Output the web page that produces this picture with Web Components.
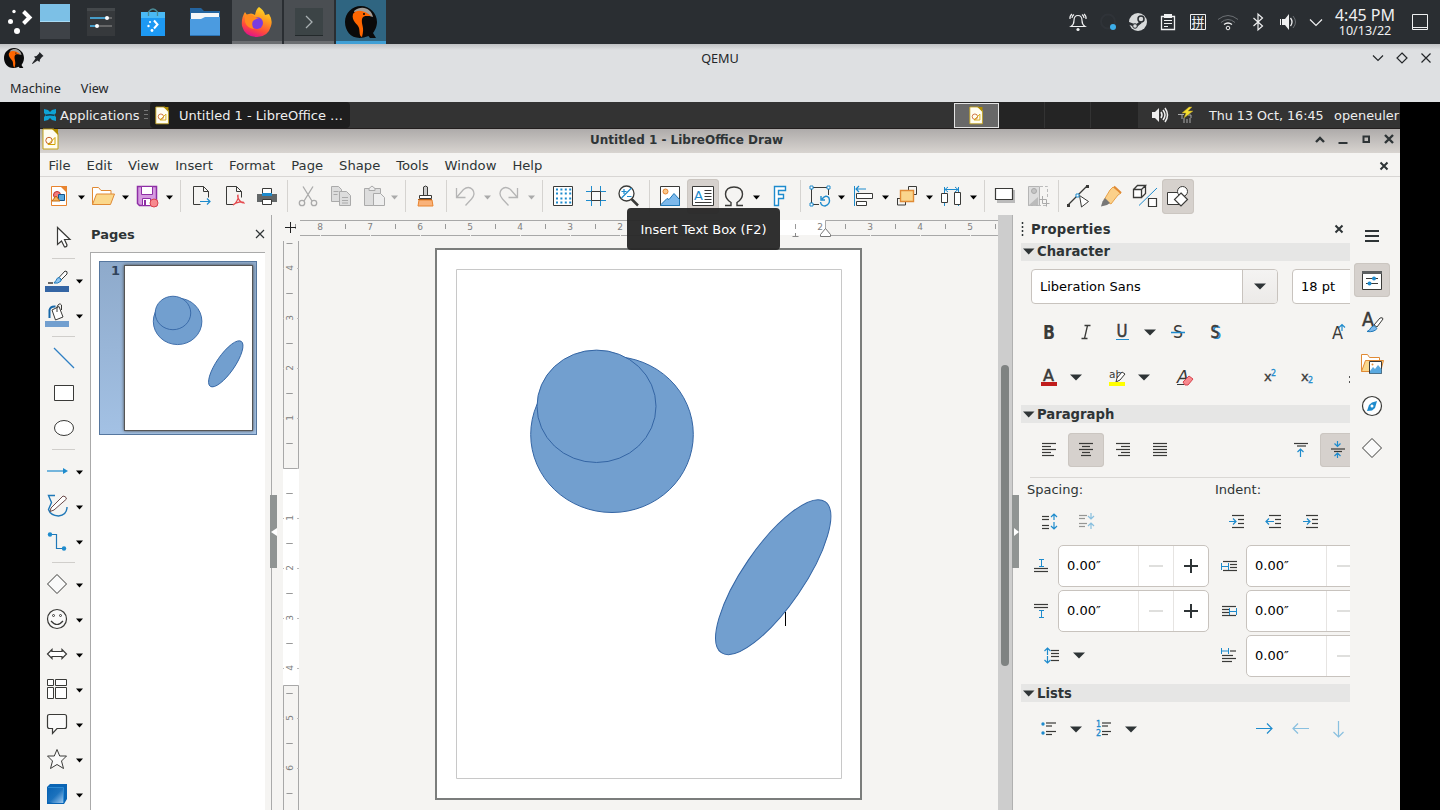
<!DOCTYPE html>
<html lang="en"><head><meta charset="utf-8"><title>QEMU</title>
<style>
html,body{margin:0;height:100%;background:#000;overflow:hidden}
body{width:1440px;height:810px;font:13.33px "DejaVu Sans",sans-serif;color:#2e3436}
</style></head><body>
<desk-top></desk-top>
<script>
const K='#3a3a38',B='#1e8bcd';
const lines=(a,c=K)=>a.map(([x1,x2,y])=>`<path d="M${x1} ${y}H${x2}" stroke="${c}" stroke-width="1.200"/>`).join('');
const up=(x,y1,y2,c=B,s=3)=>`<path d="M${x} ${y2}V${y1}m${-s} ${s}l${s} ${-s}l${s} ${s}" fill="none" stroke="${c}" stroke-width="1.200"/>`;
const down=(x,y1,y2,c=B,s=3)=>`<path d="M${x} ${y1}V${y2}m${-s} ${-s}l${s} ${s}l${s} ${-s}" fill="none" stroke="${c}" stroke-width="1.200"/>`;
const right=(x1,x2,y,c=B,s=3)=>`<path d="M${x1} ${y}H${x2}m${-s} ${-s}l${s} ${s}l${-s} ${s}" fill="none" stroke="${c}" stroke-width="1.200"/>`;
const left=(x1,x2,y,c=B,s=3)=>`<path d="M${x2} ${y}H${x1}m${s} ${-s}l${-s} ${s}l${s} ${s}" fill="none" stroke="${c}" stroke-width="1.200"/>`;
const t=(s,x,y,size,fill=K,extra='')=>`<text x="${x}" y="${y}" font-size="${size}" fill="${fill}" ${extra}>${s}</text>`;
const qemu=`<path d="M16 0C24.500 0 32 7 32 16C32 21 29.500 25 28 27L31 32H25L23.500 30C9 36 0 27 0 16C0 7 7 0 16 0Z" fill="#0a0a0a"/><path d="M9 5C17-2 27 3 28 11L21 9C12 5 9 7 9 5Z" fill="#c9c3bd" opacity=".8"/><path d="M8 8C12 2 21 5 26 10C22 10 18 9 17 13C16 19 20 21 17 31C14 30 15 26 14 22C13 18 6 15 8 8Z" fill="#f60"/><circle cx="19" cy="8" r="1" fill="#000"/>`;
const drawdoc=`<path d="M1 0H12L16 4.500V20H1Z" fill="#fffdf0" stroke="#c3a21a"/><path d="M10 0h6v6z" fill="#b08d00"/><circle cx="7" cy="11.500" r="3.200" fill="none" stroke="#c8622b"/><path d="M6 15.500h7v-7z" fill="none" stroke="#d2a400"/>`;
const ICONS={
dd:[7,5,`<path d="M0 .5H7L3.500 4.500Z" fill="#000"/>`],
ddg:[7,5,`<path d="M0 .5H7L3.500 4.500Z" fill="#aaa"/>`],
ddl:[12,7,`<path d="M0 .5H12L6 6.500Z" fill="#2e3436"/>`],
sep:[1,32,`<path d="M.5 0V32" stroke="#d5d3d0"/>`],
newdoc:[24,24,`<path d="M4.500 2.500h10l5 5v14h-15z" fill="#fff" stroke="#e8842f"/><path d="M13 2h7v7z" fill="#e8842f"/><circle cx="10" cy="11" r="3.500" fill="#f47b7b" stroke="#b92c2c"/><path d="M11.500 10.500h6v6h-6z" fill="#5aa9e0" stroke="#15548a"/><path d="M5 17l4-5 4 5z" fill="#f5b35c" stroke="#c06a10"/>`],
open:[24,24,`<path d="M1.500 20.500v-17h6l2.500 3h10v4" fill="#fff" stroke="#e08a35"/><path d="M1.500 20.500l4-10.500h18l-4 10.500z" fill="#fbd88c" stroke="#e08a35"/>`],
save:[24,24,`<path d="M2.500 2.500h19v19h-17l-2-2z" fill="#d59be0" stroke="#8e2fa5" stroke-width="1.500"/><path d="M6.500 2.500h11v8h-11z" fill="#fff" stroke="#8e2fa5"/><path d="M7.500 14.500h8v7h-8z" fill="#fff" stroke="#8e2fa5"/><path d="M9 16h2v5h-2z" fill="#8e2fa5"/><circle cx="19" cy="19" r="4" fill="#f78a8f" stroke="#d8434e"/>`],
exp:[24,24,`<path d="M4.500 20.500v-18h10l5 5v6M14.500 2.500v5h5M4.500 20.500h7" fill="none" stroke="${K}"/>${right(11,21,17.5)}`],
pdf:[24,24,`<path d="M4.500 20.500v-18h10l5 5v6M14.500 2.500v5h5M4.500 20.500h7" fill="none" stroke="${K}"/><path d="M11 21c3-1 6-7 5-10c-1 0 0 7 6 8c-1-2-8-1-11 2z" fill="none" stroke="#e5484d" stroke-width="1.200"/>`],
print:[24,24,`<path d="M7.500 12V4.500h9V12" fill="#fff" stroke="${K}"/><path d="M2 10h20v8h-20z" fill="#636768"/><path d="M7 9h10v3H7z" fill="#1e8bcd"/><path d="M7.500 15.500h9v5h-9z" fill="#fff" stroke="${K}"/>`],
cut:[24,24,`<g fill="none" stroke="#aaa" stroke-width="1.300"><path d="M7 2.500l9 14.500M17 2.500L8 17"/><circle cx="6" cy="19" r="2.700"/><circle cx="18" cy="19" r="2.700"/></g>`],
copy:[24,24,`<g fill="#ddd" stroke="#aaa"><path d="M2.500 2.500h7l3 3v12h-10z"/><path d="M10.500 7.500h7l4 4v10h-11z"/></g><path d="M4.500 7.500h5M4.500 10.500h4M13 13.500h6M13 16.500h6M13 19h6" stroke="#aaa"/>`],
paste:[24,24,`<g fill="#ddd" stroke="#aaa"><path d="M2.500 4.500h16v17h-16z"/><path d="M7 6.500V4.500l3-2.500 3 2.500v2z" fill="#eee"/><path d="M11.500 9.500h7l4 4v8h-11z" fill="#eee"/></g>`],
brush:[24,24,`<path d="M10.500 11V3q2-2 4 0v8" fill="#ccc" stroke="${K}"/><path d="M6.500 11.500h12v3h-12z" fill="#fff" stroke="${K}"/><path d="M6 16h13l1 6H5z" fill="#f9b27a" stroke="#e8842f"/><path d="M5 15.500h14" stroke="#b25a12"/>`],
undo:[24,24,`<path d="M3.500 4v9.500h9M3.500 13.500L10.500 5.500Q15.500 1.500 19.500 5.500Q23 10 18.500 15L12.500 21.500" fill="none" stroke="#b5b5b5" stroke-width="1.300"/>`],
redo:[24,24,`<path d="M20.500 4v9.500h-9M20.500 13.500L13.500 5.500Q8.500 1.500 4.500 5.500Q1 10 5.500 15L11.500 21.500" fill="none" stroke="#b5b5b5" stroke-width="1.300"/>`],
grid:[24,24,`<path d="M2.500 2.500h19v19h-19z" fill="#fff" stroke="${K}"/><path d="M5 5.500h16M5 9.500h16M5 14.500h16M5 18.500h16" stroke="${B}" stroke-width="2" stroke-dasharray="2 2.400"/>`],
snap:[24,24,`<path d="M7.500 2v20M16.500 2v20M2 7.500h20M2 16.500h20" stroke="${B}"/><path d="M7.500 7.500h9v9h-9z" fill="#fafafa" stroke="${K}"/>`],
zoom:[24,24,`<circle cx="10.500" cy="9.500" r="7.500" fill="#fff" stroke="${K}" stroke-width="1.300"/><path d="M15.500 15l6.500 6.500" stroke="${K}" stroke-width="2.500"/><path d="M5.500 14L15.500 4M5.500 7.500h5M8 5v5M11 12.500h4.500" stroke="${B}" stroke-width="1.200"/>`],
image:[24,24,`<path d="M2.500 2.500h19v19h-19z" fill="#fff" stroke="${K}"/><circle cx="7.500" cy="7.500" r="2.500" fill="#fbc88a" stroke="#e8842f"/><path d="M3 20.500l6-6 2 1 5-6 5.500 6v6H3z" fill="#7db9ec" stroke="#1f78b8"/>`],
textbox:[24,24,`<path d="M1.500 2.500h21v19h-21z" fill="#fff" stroke="${K}"/>${t('A',3,15.5,13,B)}<path d="M13.500 6.500h7M13.500 9.500h7M13.500 12.500h7M13.500 15.500h7M4 18.500h16.500" stroke="${K}"/>`],
omega:[24,24,`<path d="M3 21.500h6v-3Q3.500 15 3.500 10Q4 3 12 3Q20 3 20.500 10Q20.500 15 15 18.500v3h6" fill="none" stroke="${K}" stroke-width="1.400"/>`],
fw:[24,24,`<path d="M6.500 21.500v-19h11v4h-7v4h5v4h-5v7z" fill="#fff" stroke="${B}" stroke-width="1.400"/>`],
rot:[24,24,`<path d="M3.500 4V20M4 3.500H20M20.500 4V11M4 20.500H11" stroke="${K}"/><g fill="#fff" stroke="${B}"><path d="M2 2h3v3h-3zM19 2h3v3h-3zM2 19h3v3h-3z"/></g><path d="M13 12v4h4M14 15Q18 10 21 14Q23 20 17 22Q13 22 12.500 18" fill="none" stroke="${B}" stroke-width="1.400"/>`],
align:[24,24,`<path d="M2.500 2v20" stroke="${B}"/>${left(4,14,5)}<path d="M4.500 9.500h16v5h-16zM4.500 17.500h10v4h-10z" fill="#fff" stroke="${K}"/>`],
arrange:[24,24,`<path d="M13.500 6v-3.500h8v8H18M2.500 15v6h8V18M2 14.500h3" fill="none" stroke="${K}"/><path d="M5.500 6.500h13v11h-13z" fill="#fad58c" stroke="#e08a35" stroke-width="1.400"/>`],
dist:[24,24,`<path d="M4.500 3v19M18.500 3v19" stroke="${B}"/><path d="M5 5.500h13M8 3l-3 2.500 3 2.500M15 3l3 2.500-3 2.500" fill="none" stroke="${B}"/><path d="M1.500 9.500h6v9h-6zM14.500 8.500h6v12h-6z" fill="#fff" stroke="${K}"/>`],
shadow:[24,24,`<path d="M4 6h18v13H4z" fill="#bbb"/><path d="M2.500 4.500h17v11h-17z" fill="#fff" stroke="${K}" stroke-width="1.200"/>`],
crop:[24,24,`<path d="M2.500 2.500h11v19h-11z" fill="#ddd" stroke="#b5b5b5"/><circle cx="8" cy="7" r="2.500" fill="#c4c4c4" stroke="#aaa"/><path d="M3 21l9-8v8z" fill="#bbb"/><path d="M14 2.500h7.500v12M2 21.500h19" fill="none" stroke="#bbb" stroke-dasharray="3 2"/><path d="M16.500 12v7.500h7M13 15.500h7.500v7" fill="none" stroke="#aaa"/>`],
points:[24,24,`<path d="M2 21L21 2" stroke="${K}" stroke-width="1.200"/><path d="M1 20h3v3H1zM20 1h3v3h-3z" fill="${K}"/><path d="M13.500 11.500l9 6-7 5.500z" fill="#fff" stroke="${K}"/><path d="M10 10h3v3h-3z" fill="#fff" stroke="${B}"/>`],
glue:[24,24,`<path d="M14 3l8 6-3 2-7 9-7-4 6-10z" fill="#fbd08a" stroke="#e8a24a"/><path d="M15 2.500l7 6.500" stroke="#e08a35" stroke-width="2"/><path d="M6 14l5 5-3 2-6 1.500 1.500-5z" fill="#777"/>`],
extr:[24,24,`<path d="M0 5.500h8v8h-8zM0 5.500l4-4h8l-4 4M12 1.500v8l-4 4" transform="translate(.5 0)" fill="#fff" stroke="${K}" stroke-width="1.300"/><path d="M6 21.500L24 4" stroke="${B}"/><path d="M15.500 14.500h8v8h-8z" fill="#fff" stroke="${K}" stroke-width="1.200"/>`],
shapes:[24,24,`<path d="M1.500 8.500h12v12h-12z" fill="#fff" stroke="${K}"/><circle cx="16.500" cy="7.500" r="5" fill="#fff" stroke="${K}"/><path d="M15 9l6.500 6.500-6.500 6.500-6.500-6.500z" fill="#fff" stroke="${K}" stroke-width="1.200"/>`],
cursor:[24,24,`<path d="M5.500 2.500v17l4-3.500 3 6q2.500 0 2.500-2l-2.500-5.500h5.500z" fill="#fff" stroke="${K}" stroke-width="1.200"/>`],
linecol:[24,28,`<path d="M0 20h24v6H0z" fill="#3465a4"/><path d="M3 17h5" stroke="${K}" stroke-width="1.500"/><path d="M14 11.500L20 5q3 0 2 3l-6 6z" fill="#fff" stroke="${K}"/><path d="M9 17q4 1 7-2l0-2-2-1.500q-2 0-3 3z" fill="#8dc4f0" stroke="#1f78b8"/>`],
fillcol:[24,28,`<path d="M0 20h24v6H0z" fill="#729fcf"/><path d="M7 9l7-3.500 4 10.500-7.500 3z" fill="#fff" stroke="${K}"/><path d="M12 11V6q2-5 4.500-2v5" fill="none" stroke="${K}"/><path d="M4.500 17V9q1-4 6-3.500" fill="none" stroke="#1767a8" stroke-width="2"/>`],
line:[24,24,`<path d="M2 2l20 20" stroke="#2f7fc4" stroke-width="1.200"/>`],
rect:[24,24,`<path d="M2.500 4.500h19v15h-19z" fill="#fff" stroke="${K}"/>`],
ell:[24,24,`<ellipse cx="12" cy="12" rx="9.500" ry="7.500" fill="#fff" stroke="${K}"/>`],
larrow:[24,24,`<path d="M2 12h18" stroke="${B}" stroke-width="1.200"/><path d="M18 9l5 3-5 3z" fill="${B}"/>`],
curve:[24,24,`<path d="M10 1.500H3.500l3 7-3 7q2 6 10 6.500Q22 21 22 13" fill="none" stroke="#1f78b8" stroke-width="1.400"/><path d="M6 14L18 2q3 0 3.500 3L9 16l-4 1.500z" fill="#fff" stroke="#6b4a4a"/>`],
conn:[24,24,`<path d="M5 5.500h6.500v14H19" fill="none" stroke="#1f78b8" stroke-width="1.200"/><circle cx="5" cy="5.500" r="2.200" fill="${B}"/><circle cx="19" cy="19.500" r="2.200" fill="${B}"/>`],
diamond:[24,24,`<path d="M12 2.500l9.500 9.500-9.500 9.500L2.500 12z" fill="#fafafa" stroke="${K}"/>`],
smile:[24,24,`<circle cx="12" cy="12" r="9.500" fill="#fafafa" stroke="${K}" stroke-width="1.200"/><circle cx="8.500" cy="8.500" r="1" fill="none" stroke="${K}"/><circle cx="15.500" cy="8.500" r="1" fill="none" stroke="${K}"/><path d="M6 14q6 7 12 0" fill="none" stroke="${K}" stroke-width="1.200"/>`],
dbl:[24,24,`<path d="M2.500 12L7 7.500v2h10v-2l4.500 4.500-4.500 4.500v-2H7v2z" fill="#fff" stroke="${K}" stroke-width="1.200"/>`],
flow:[24,24,`<g fill="#fff" stroke="${K}"><path d="M2.500 2.500h6v6h-6zM10.500 2.500h11v6h-11zM2.500 10.500h6v11h-6zM10.500 10.500h11v11h-11z"/></g>`],
callout:[24,24,`<path d="M4.500 2.500h15q2 0 2 2v10q0 2-2 2H12l-4.500 5v-5h-3q-2 0-2-2v-10q0-2 2-2z" fill="#fafafa" stroke="${K}" stroke-width="1.200"/>`],
star:[24,24,`<path d="M12 2.500l2.700 6.500h6.800l-5 5 2 7.500-6.500-4-6.500 4 2-7.500-5-5h6.800z" fill="#fafafa" stroke="${K}"/>`],
cube:[24,24,`<path d="M2 5l3-3h17v15l-3 5H2z" fill="#0a64b4"/><path d="M3 6h15v15H8L3 20z" fill="url(#cg)"/><defs><linearGradient id="cg" x2="1" y2="1"><stop stop-color="#0a64b4"/><stop offset=".5" stop-color="#1c72bd"/><stop offset="1" stop-color="#9cc7ef"/></linearGradient></defs><path d="M3 5.500h15.500V21" fill="none" stroke="#2d8ad3"/>`],
bold:[24,24,t('B',7,18.500,19,K,'font-weight="700" textLength="12" lengthAdjust="spacingAndGlyphs"')],
ital:[24,24,`<path d="M11.500 5.500h6M8.500 18.500h6M14.500 5.500l-3 13" stroke="${K}" stroke-width="1.300"/>`],
und:[24,24,`${t('U',6.5,17,17,K,`stroke="${K}" stroke-width=".5" textLength="11" lengthAdjust="spacingAndGlyphs"`)}<path d="M6 19.500h13" stroke="${B}"/>`],
strike:[24,24,`${t('S',7,18,17,K,'textLength="10" lengthAdjust="spacingAndGlyphs"')}<path d="M5 12.500h14" stroke="${B}" stroke-width="1.500"/>`],
shad:[24,24,`${t('S',8.2,19,17,B,'textLength="9" lengthAdjust="spacingAndGlyphs"')}${t('S',6.5,18,17,K,`stroke="${K}" stroke-width=".5" textLength="9" lengthAdjust="spacingAndGlyphs"`)}`],
grow:[24,24,`${t('A',3,18.500,17,K,'textLength="11" lengthAdjust="spacingAndGlyphs"')}${up(13,4.5,11)}`],
fcol:[24,24,`${t('A',6,16,16,K,`stroke="${K}" stroke-width=".5" textLength="11" lengthAdjust="spacingAndGlyphs"`)}<path d="M4 17h16v4H4z" fill="#c01c1c"/>`],
hl:[24,24,`${t('ab',4,13,10.5)}<path d="M12 13l5-6 3 2-5 6-4 2z" fill="#fff" stroke="${K}"/><path d="M4 17h16v4H4z" fill="#ffff00"/>`],
clear:[24,24,`${t('A',5,18,18,K,'font-style="italic" textLength="12" lengthAdjust="spacingAndGlyphs"')}<path d="M11 17l6-6 4 3-5 6h-3z" fill="#f78a8f" stroke="#d8434e"/><path d="M5 19.500h7" stroke="${K}"/>`],
sup:[24,24,`${t('x',6,16,13,K,`stroke="${K}" stroke-width=".4"`)}${t('2',13,11,8,B,`stroke="${B}" stroke-width=".3"`)}`],
sub:[24,24,`${t('x',6,16,13,K,`stroke="${K}" stroke-width=".4"`)}${t('2',13,18,8,B,`stroke="${B}" stroke-width=".3"`)}`],
colon:[4,24,`<path d="M0 11h1v2H0zM0 16h1v2H0z" fill="#555"/>`],
al:[24,24,lines([[5,19,5.500],[5,14,8.500],[5,19,11.500],[5,14,14.500],[5,17,17.500]])],
ac:[24,24,lines([[5,19,5.500],[8,16,8.500],[5,19,11.500],[8,16,14.500],[7,17,17.500]])],
ar:[24,24,lines([[5,19,5.500],[10,19,8.500],[5,19,11.500],[10,19,14.500],[7,19,17.500]])],
aj:[24,24,lines([[5,19,5.500],[5,19,8.500],[5,19,11.500],[5,19,14.500],[5,19,17.500]])],
vt:[24,24,lines([[5,19,5.500],[8,17,8]])+up(11.500,11,19)],
vc:[24,24,lines([[5,19,11],[8,16,13.500]])+down(11.500,3,8.500)+up(11.500,15,20)],
sinc:[24,24,lines([[5,12,7.500],[5,12,10.500],[5,12,16.500],[5,12,19.500]])+up(17,5,11)+down(17,13,20)],
sdec:[24,24,`<g opacity=".5">${lines([[5,13,6.500],[5,11,9.500],[5,13,14.500],[5,11,17.500]])+down(17,4,10)+up(17,14,20)}</g>`],
ii:[24,24,lines([[7,19,6.500],[13,19,10.500],[13,19,14.500],[7,19,18.500]])+right(4,11,12.500)],
id:[24,24,lines([[7,19,6.500],[13,19,10.500],[13,19,14.500],[7,19,18.500]])+left(4,12,12.500)],
above:[24,24,lines([[5,19,14.500],[5,19,17.500]])+`<path d="M10 5.500h5M12.500 5.500v7M10 12.500h5" stroke="${B}"/>`],
below:[24,24,lines([[5,19,5.500],[5,19,8.500]])+`<path d="M10 11.500h5M12.500 11.500v7M10 18.500h5" stroke="${B}"/>`],
bi:[24,24,lines([[6,20,7.500],[13,20,10.500],[13,20,13.500],[6,20,16.500]])+`<path d="M4.500 9v7M4.500 12.500h7M11.500 9v7" stroke="${B}"/>`],
ai:[24,24,lines([[5,19,7.500],[5,12,10.500],[5,12,13.500],[5,19,16.500]])+`<path d="M12.500 9v7M12.500 12.500h7M19.500 9v7" stroke="${B}"/>`],
fi:[24,24,lines([[13,19,7],[5,16,11.500],[5,19,14.500],[5,15,17.500]])+`<path d="M4.500 4v6M4.500 7h7M11.500 4v6" stroke="${B}"/>`],
lsp:[24,24,lines([[12,20,6.500],[12,20,9.500],[12,20,12.500],[12,20,16.500]])+up(8.500,4,11)+down(8.500,12,19)],
bul:[24,24,lines([[9,19,6],[9,15,9],[9,19,14.500],[9,15,17.500]])+`<circle cx="6" cy="7" r="1.700" fill="${B}"/><circle cx="6" cy="16" r="1.700" fill="${B}"/>`],
num:[24,24,lines([[10,19,6],[10,16,9],[10,19,14.500],[10,16,17.500]])+t('1',4,10,8,B,`stroke="${B}" stroke-width=".3"`)+t('2',4,19,8,B,`stroke="${B}" stroke-width=".3"`)],
dem:[24,24,right(4,20,11.500,B,5)],
pro:[24,24,`<g opacity=".5">${left(4,20,11.500,B,5)}</g>`],
mdn:[24,24,`<g opacity=".5">${down(12.500,4,20,B,5)}</g>`],
menu:[24,24,`<path d="M5 7h14M5 12h14M5 17h14" stroke="#2e3436" stroke-width="2"/>`],
props:[24,24,`<path d="M2.500 3.500h19v18h-19z" fill="#fff" stroke="${K}"/><path d="M2 3h20v3H2z" fill="#5c5f60"/><path d="M6 10.500h12M6 15.500h12" stroke="${K}"/><circle cx="14" cy="10.500" r="2" fill="${B}"/><circle cx="9.500" cy="15.500" r="2" fill="${B}"/>`],
styles:[24,24,`${t('A',2,16,19,K,'textLength="12" lengthAdjust="spacingAndGlyphs" stroke="#3a3a38" stroke-width=".5"')}<path d="M14 15l6-7q3-1 3 1l-6 8z" fill="#fff" stroke="${K}"/><path d="M7 21.500q3-1 4-4l3-2 3 3q-3 4-10 3z" fill="#7db9ec" stroke="#1f78b8"/>`],
gallery:[26,24,`<path d="M2.500 19.500v-17h6l2 3h10v4" fill="#fff" stroke="#e08a35"/><path d="M2.500 19.500l4-11h18l-3 11z" fill="#fbd88c" stroke="#e08a35"/><path d="M10.500 9.500h12v12h-12z" fill="#fff" stroke="${K}"/><path d="M11 19l3-4 2 2 3-4 3.500 4v4.500H11z" fill="#5aa9e0"/><circle cx="13.500" cy="12.500" r="1" fill="#e08a35"/>`],
compass:[24,24,`<circle cx="12" cy="12" r="9.500" fill="#fff" stroke="${K}" stroke-width="1.200"/><path d="M17 7l-2 7-3 2.500L7 17l2-6 3-2.500z" fill="${B}"/><circle cx="12" cy="12" r="1.500" fill="#fff"/>`],
x:[10,10,`<path d="M1.500 1.500l7 7M8.500 1.500l-7 7" stroke="#2e3436" stroke-width="2"/>`],
xt:[10,10,`<path d="M1 1l8 8M9 1l-8 8" stroke="#2e3436" stroke-width="1.200"/>`],
xup:[10,10,`<path d="M1 8l4-4L9 8" fill="none" stroke="#2e3436" stroke-width="2.400"/>`],
xmin:[10,10,`<path d="M.5 9h9" stroke="#2e3436" stroke-width="2"/>`],
xmax:[10,10,`<path d="M2.500 2.500h5.500v5.500H2.500z" fill="none" stroke="#2e3436" stroke-width="2"/>`],
xw:[10,10,`<path d="M1 1l8 8M9 1l-8 8" stroke="#2e3436" stroke-width="2.400"/>`],
kdn:[14,14,`<path d="M2 4.500l5 5 5-5" fill="none" stroke="#232629" stroke-width="1.200"/>`],
kdi:[14,14,`<path d="M7 2l5 5-5 5-5-5z" fill="none" stroke="#232629" stroke-width="1.200"/>`],
kx:[14,14,`<path d="M2.500 2.500l9 9M11.500 2.500l-9 9" stroke="#232629" stroke-width="1.200"/>`],
pin:[12,12,`<path d="M7.500 0l4 4-1.500 1-2 2.500-.5 2.500-2-1.500L.5 12l-.5-.5L3.500 6.500 2 4.500 4.500 4l2.500-2.500z" fill="#232629"/>`],
qemus:[20,20,`<g transform="scale(.625)">${qemu}</g>`],
qemub:[32,32,qemu],
drawdoc:[17,21,drawdoc],
drawdocs:[15,17,`<g transform="scale(.84)">${drawdoc}</g>`],
launcher:[26,28,`<circle cx="8" cy="3.500" r="1.700" fill="#fff"/><circle cx="4.500" cy="13.500" r="2.500" fill="#fff"/><circle cx="11" cy="23" r="3" fill="#fff"/><path d="M17.500 3.500l6 6-6 6" fill="none" stroke="#fff" stroke-width="4"/>`],
pager:[30,36,`<path d="M0 0h30v18H0z" fill="#7cc0e6"/><path d="M0 18h30v17H0z" fill="#3e4247"/><path d="M0 17.500h30" stroke="#a9dcf5"/>`],
settings:[28,28,`<path d="M0 0h28v28H0z" fill="#36393c"/><path d="M0 0h28v3H0z" fill="#44484b"/><path d="M3 10h22M3 18h22" stroke="#777" stroke-width="1.500"/><path d="M3 10h17" stroke="#3daee9" stroke-width="1.500"/><path d="M3 18h7" stroke="#3daee9" stroke-width="1.500"/><circle cx="20" cy="10" r="2" fill="#fff"/><circle cx="10" cy="18" r="2" fill="#fff"/>`],
discover:[24,28,`<path d="M0 4h24v24H0z" fill="#1d99f3"/><path d="M0 4h24v6H0z" fill="#4ab9f5"/><path d="M7.500 8V4q4.500-6 9 0v4" fill="none" stroke="#4a8a96" stroke-width="1.300"/><path d="M13 12.500l3.500 4-3.500 4" fill="none" stroke="#fff" stroke-width="2"/><circle cx="9" cy="14" r="1" fill="#fff"/><circle cx="7.500" cy="18" r="1.200" fill="#fff"/><circle cx="11" cy="22.500" r="1.400" fill="#fff"/>`],
folder:[30,28,`<path d="M0 0h11l3 3h16v10H0z" fill="#24649f"/><path d="M1 5h28v8H1z" fill="#f4f6f8"/><path d="M0 11h11l4-2h15v19H0z" fill="#4b9be0"/><path d="M0 27.500h30" stroke="#2c74b5"/>`],
firefox:[32,32,`<defs><linearGradient id="ff" x1=".8" y1="0" x2=".4" y2="1"><stop stop-color="#ffe226"/><stop offset=".4" stop-color="#ff9a1f"/><stop offset=".75" stop-color="#ff4a3c"/><stop offset="1" stop-color="#e31587"/></linearGradient></defs><path d="M18 1Q23 4 24 9L28 8Q32 14 30 20Q27 31 16 31Q4 31 1 20Q0 12 4 6L6 9Q10 6 14 9Q15 3 18 1Z" fill="url(#ff)"/><circle cx="16" cy="17" r="6" fill="#7a3ce0"/><path d="M4 9Q10 7 14 11L18 12Q14 13 12 15Q10 19 13 23Q6 22 4 16Z" fill="#ff8a1f"/>`],
konsole:[28,28,`<path d="M0 0h28v28H0z" fill="#3c4446"/><path d="M0 27.500h28" stroke="#23292b"/><path d="M11 8l6 6-6 6" fill="none" stroke="#a9b0b2" stroke-width="1.300"/>`],
bell:[20,20,`<g fill="none" stroke="#eff0f1" stroke-width="1.200"><path d="M3 14.500h14q-3-2-3-6q0-5-4-5t-4 5q0 4-3 6z"/><path d="M4 2Q1.500 4 2 7M16 2q2.500 2 2 5M6 2.500Q4 4 4 6M14 2.500q2 1.500 2 3.500"/></g><circle cx="10" cy="17.500" r="1.600" fill="#eff0f1"/>`],
dotb:[20,20,`<circle cx="8" cy="9.500" r="7" fill="none" stroke="#2f3338" stroke-width="2"/><circle cx="13" cy="15" r="3" fill="#3daee9"/>`],
steam:[20,20,`<circle cx="10" cy="10" r="9" fill="#d8dadb"/><path d="M0 11l8 3 5-4" fill="none" stroke="#2a2e32" stroke-width="2.500"/><circle cx="13" cy="7" r="3" fill="#d8dadb" stroke="#2a2e32" stroke-width="1.500"/><circle cx="7" cy="14" r="2.300" fill="#d8dadb" stroke="#2a2e32"/>`],
clip:[20,20,`<path d="M3.500 4.500h13v13h-13z" fill="none" stroke="#eff0f1" stroke-width="1.300"/><path d="M6 2h8v4H6z" fill="#eff0f1"/><path d="M6 8.500h8M6 11.500h8M6 14.500h4" stroke="#eff0f1"/>`],
pinyin:[20,20,`<path d="M2.500 2.500h15v15h-15z" fill="none" stroke="#eff0f1"/><text x="3.500" y="15" style="font-family:'Noto Sans CJK SC',sans-serif" font-size="13" fill="#eff0f1">拼</text>`],
wifi:[22,20,`<g fill="none"><path d="M1 7.500q10-8 20 0M4 10.500q7-6 14 0" stroke="#6a6e72"/><path d="M7 12.500q4-3 8 0" stroke="#eff0f1" stroke-width="1.300"/><circle cx="11" cy="16" r="1.800" stroke="#eff0f1"/></g>`],
bt:[20,20,`<path d="M5.500 6l9 8-4.500 4V2l4.500 4-9 8" fill="none" stroke="#eff0f1" stroke-width="1.200"/>`],
vol:[20,20,`<path d="M2 7v6h1V7zM4 7h3l4-5v16l-4-5H4z" fill="#eff0f1"/><path d="M12.500 6q3 4 0 8" fill="none" stroke="#eff0f1" stroke-width="1.300"/><path d="M15 4q5 6 0 12" fill="none" stroke="#6a6e72"/>`],
chev:[14,14,`<path d="M1 4.500l6 6 6-6" fill="none" stroke="#eff0f1" stroke-width="1.200"/>`],
desk:[16,16,`<path d="M.5.5h15v15H.5zM1 13.500h14" fill="none" stroke="#eff0f1"/>`],
xfce:[14,14,`<path d="M1 1l4 1 2 2 2-2 4-1 0 4-2 2 2 2v4l-4-1-2-2-2 2-4 1v-4l2-2-2-2z" fill="#0fa3d6"/><path d="M3 6.500q4-1 8 0v1.500q-4-1-8 0z" fill="#17384a"/>`],
gvol:[16,14,`<path d="M0 4h3l4-4v14l-4-4H0z" fill="#eee"/><path d="M9 4q2 3 0 6M11 2q4 5 0 10M13 0q5 7 0 14" fill="none" stroke="#eee" stroke-width="1.500"/>`],
power:[16,16,`<path d="M4 12V8M6 16v-5M9 16v-4M12 16v-5M0 7.500h6M10 8h3v3" stroke="#aaa" fill="none"/><path d="M11 0L4 6h4l-2 5 9-7h-5l4-4z" fill="#f5dd30" stroke="#a8922a" stroke-width=".5"/>`],
grip:[4,14,`<path d="M1.500 0v14" stroke="#2e3436" stroke-width="1.500" stroke-dasharray="2 2"/>`],
hgrip:[4,12,`<path d="M0 1.500h4M0 5.500h4M0 9.500h4" stroke="#777"/>`]
};
const strip=(x0,items)=>{let p=x0;return items.map(([n,c,a=''])=>{const w=a.includes('pressed')?(a.includes('wide')?36:32):ICONS[n][0];const l=Math.round(c-w/2),m=l-p;p=l+w;return `<ui-icon name="${n}" ${a} style="margin-left:${m}px"></ui-icon>`}).join('')};
const def=(name,css,html)=>customElements.define(name,class extends HTMLElement{connectedCallback(){if(this.shadowRoot)return;const r=this.attachShadow({mode:'open'});r.innerHTML=`<style>*{box-sizing:border-box}${css}</style>${typeof html==='function'?html(this):html}`}});

def('ui-icon',`:host{display:inline-flex;flex:none;align-items:center;justify-content:center}:host([pressed]){width:32px;height:35px;background:#d6d1cd;border-radius:4px;box-shadow:inset 0 0 0 1px #cbc6c1}:host([wide]){width:36px;height:34px}svg{display:block;overflow:visible;flex:none}text{font-family:"DejaVu Sans",sans-serif}`,
e=>{const [w,h,s]=ICONS[e.getAttribute('name')];return `<svg width="${w}" height="${h}" viewBox="0 0 ${w} ${h}" fill="none">${s}</svg>`});

def('host-panel',`:host{display:flex;height:44px;background:#2a2e32;color:#eff0f1;font-family:"Noto Sans",sans-serif;align-items:center}
.l{display:flex;align-items:center;flex:1;height:44px}.task{width:50px;height:44px;display:flex;align-items:center;justify-content:center;border-bottom:3px solid #6b6e71;background:#4a4e52;margin-left:2px;padding-top:3px}.task.on{background:#2f6581;border-color:#3f9fd5}.task:first-of-type{margin-left:12px}
.clock{width:62px;margin-left:11px;text-align:center}.clock b{font-weight:400;font-size:16px;line-height:17px;display:block;white-space:nowrap}.clock span{font-size:12.600px;line-height:13px;display:block}.r{display:flex;align-items:center;height:44px}`,
`<div class="l">${strip(0,[['launcher',19],['pager',55],['settings',101],['discover',153],['folder',205]])}<div class="task"><ui-icon name="firefox"></ui-icon></div><div class="task"><ui-icon name="konsole"></ui-icon></div><div class="task on"><ui-icon name="qemub"></ui-icon></div></div>
<div class="r">${strip(1068,[['bell',1078],['dotb',1110],['steam',1138],['clip',1168],['pinyin',1198],['wifi',1228],['bt',1258],['vol',1288],['chev',1316]])}<div class="clock"><b>4:45 PM</b><span>10/13/22</span></div><ui-icon name="desk" style="margin:0 12px 0 16px"></ui-icon></div>`);

def('qemu-frame',`:host{display:block;height:58px;background:linear-gradient(#c0c2c4,#dee0e2 6px);color:#232629;font-family:"Noto Sans",sans-serif;font-size:12.700px}
.t{display:grid;grid-template-columns:1fr auto 1fr;height:28px;align-items:center}.a{display:flex;align-items:center}.z{display:flex;justify-content:flex-end;gap:10px;padding-right:7px}.m{display:flex;height:30px;align-items:center;gap:20px;padding:2px 10px 0}`,
`<div class="t"><div class="a">${strip(0,[['qemus',14],['pin',38]])}</div><span>QEMU</span><div class="z"><ui-icon name="kdn"></ui-icon><ui-icon name="kdi"></ui-icon><ui-icon name="kx"></ui-icon></div></div><div class="m"><span>Machine</span><span>View</span></div>`);

def('guest-panel',`:host{display:flex;height:26px;background:#333;color:#eee;align-items:center;font-size:13px;white-space:nowrap}
div{flex:none}.app{display:flex;align-items:center;width:110px;padding-left:3px;gap:3px}.app span{width:80px}.app ui-icon:last-child{margin-left:1px}.task{width:200px;height:26px;background:#1e1e1e;border-radius:4px;display:flex;align-items:center;padding-left:5px;gap:9px}.ws{display:flex;margin-left:604px;background:#242424;height:26px;align-items:center;width:184px}.ws i{height:26px;width:46px;border-right:1px solid #333}.ws .on{width:45px;height:25px;background:#686868;border:1px solid #e4e4e4;display:flex;align-items:center;justify-content:center}.r{display:flex;align-items:center}`,
`<div class="app"><ui-icon name="xfce"></ui-icon><span>Applications</span><ui-icon name="hgrip"></ui-icon></div><div class="task"><ui-icon name="drawdocs"></ui-icon><span>Untitled 1 - LibreOffice …</span></div><div class="ws"><div class="on"><ui-icon name="drawdocs"></ui-icon></div><i></i><i></i></div><div class="r">${strip(1138,[['gvol',1160],['power',1186]])}<span style="margin-left:15px;width:125px;font-size:12.700px">Thu 13 Oct, 16:45</span><span style="font-size:12.900px">openeuler</span></div>`);

def('draw-title',`:host{display:flex;height:25px;border-top:1px solid #231f1f;background:linear-gradient(#aeabaa,#d8d4d0);align-items:center}b{font-size:12px;white-space:nowrap;padding-bottom:3px}.a{display:flex;width:550px;margin-top:-4px}.r{display:flex;flex:1;justify-content:flex-end;gap:13px;padding:0 6px 4px 0}`,
`<div class="a"><ui-icon name="drawdoc" style="margin-left:2px"></ui-icon></div><b>Untitled 1 - LibreOffice Draw</b><div class="r"><ui-icon name="xup"></ui-icon><ui-icon name="xmin"></ui-icon><ui-icon name="xmax"></ui-icon><ui-icon name="xw"></ui-icon></div>`);

def('menu-bar',`:host{display:flex;height:24px;border-bottom:1px solid #d8d6d4;align-items:center;padding:2px 11px 0 8.600px;gap:16px;font-size:13.150px}ui-icon{margin-left:auto}`,
['File','Edit','View','Insert','Format','Page','Shape','Tools','Window','Help'].map(s=>`<span>${s}</span>`).join('')+'<ui-icon name="x"></ui-icon>');

def('tool-bar',`:host{display:flex;height:38px;align-items:center}ui-icon[name^=dd]{margin-top:2px}`,
strip(40,[['newdoc',59],['dd',81.500],['open',103],['dd',125.500],['save',147],['dd',169.500],['sep',180.500],['exp',201],['pdf',234],['print',267],['sep',287.500],['cut',308],['copy',341],['paste',374],['ddg',394.500],['sep',405.500],['brush',425],['sep',446.500],['undo',465],['ddg',487.500],['redo',509],['ddg',531.500],['sep',542.500],['grid',563],['snap',596],['zoom',628],['sep',649.500],['image',670],['textbox',703,'pressed'],['omega',734],['dd',756.500],['fw',780],['sep',800.500],['rot',820],['dd',841.500],['align',864],['dd',885.500],['arrange',907],['dd',929.500],['dist',952],['dd',973.500],['sep',984.500],['shadow',1005],['crop',1038],['sep',1058.500],['points',1078],['glue',1111],['extr',1145],['shapes',1177.500,'pressed']]));

const hr='<hr>';
def('shape-bar',`:host{display:flex;flex-direction:column;width:50px;flex:none;overflow:hidden;padding-top:4px}div{display:flex;height:35px;align-items:center;flex:none}hr{width:23px;height:1px;border:0;background:#d0cecb;margin:4px 0 3px 12px;flex:none}`,
(()=>{const one=n=>`<div>${strip(40,[[n,64]])}</div>`,two=n=>`<div>${strip(40,[[n,57]])}<ui-icon name="dd" style="margin:4px 0 0 7px"></ui-icon></div>`;
return one('cursor')+hr+two('linecol')+two('fillcol')+hr+one('line')+one('rect')+one('ell')+hr+['larrow','curve','conn'].map(two).join('')+hr+['diamond','smile','dbl','flow','callout','star','cube'].map(two).join('')})());

const shapes=`<g fill="#729fcf" stroke="#3465a4"><ellipse cx="612" cy="434.500" rx="81.300" ry="78"/><ellipse cx="596.500" cy="406.300" rx="59.500" ry="56.200"/><ellipse cx="773.200" cy="577.200" rx="91.600" ry="30.200" transform="rotate(-55.500 773.200 577.200)"/></g>`;
def('pages-panel',`:host{display:flex;flex-direction:column;width:182px;flex:none;border-right:1px solid #aaa}.h{height:37px;display:flex;align-items:center;justify-content:space-between;padding:1px 6px 0 1px}.h b{font-size:13px}.list{flex:1;background:#fff;border-left:1px solid #aaa;border-top:1px solid #aaa;width:175px;padding:8px}.it{width:158px;height:174px;border:1px solid #56779f;background:linear-gradient(#8eaacb,#a3c1e4);display:flex;justify-content:flex-end;padding:3px 3px}.it b{font:bold 13px/1 "DejaVu Sans",sans-serif;color:#31435a;margin:-1px 4px 0 0}.pg{width:129px;height:166px;background:#fff;border:1px solid #555;box-shadow:0 0 3px #444}svg{display:block}`,
`<div class="h"><b>Pages</b><ui-icon name="xt"></ui-icon></div><div class="list"><div class="it"><b>1</b><div class="pg"><svg width="127" height="164" viewBox="436 248.500 425 551" preserveAspectRatio="none">${shapes.replace('<g ','<g stroke-width="3" ')}</svg></div></div></div>`);

def('canvas-view',`:host{display:block;flex:1;min-width:0;overflow:hidden}svg{display:block}text{font-family:"DejaVu Sans",sans-serif;font-size:9px;fill:#808080;text-anchor:middle}`,()=>{
let s='';for(let i=-9;i<=5;i++){const x=719.500+i*50;const xr=Math.round(x);if(x>300&&Math.abs(i)!==1&&i)s+=`<text x="${xr}" y="230">${Math.abs(i)}</text>`;if(i<-2||i>=1)s+=`<path d="M${xr+25.500} 224v5" stroke="#999"/>`;s+=`<path d="M${xr+.5} 234.500v2" stroke="#f5f4f2"/>`}
for(let i=-4;i<=6;i++){const y=468+i*50;if(i)s+=`<text transform="translate(293 ${y}) rotate(-90)" x="0" y="0">${Math.abs(i)}</text>`;s+=`<path d="M286.500 ${y+25.500}h6M286.500 ${y-24.500}h6" stroke="#999"/><path d="M283 ${y+.5}h1M297 ${y+.5}h2" stroke="#bbb"/>`}
return `<svg width="726" height="595" viewBox="272 215 726 595"><path d="M272 215h726v595H272z" fill="#f5f4f2"/>
<path d="M720 220h105v15H720z" fill="#fff"/><path d="M300 220.500h420M300 235.500h420M825.500 220.500H998M825.500 220.500v15M825.500 235.500H998" stroke="#a8a8a8"/>
<path d="M283 469h16v216h-16z" fill="#fff"/><path d="M283.500 241v227.500h15V241M283.500 810V685.500h15V810" fill="none" stroke="#a8a8a8"/>${s}
<path d="M285 227.500h11M290.500 222v11" stroke="#222"/><path d="M820.500 236.500v-2l5-6 5 6v2z" fill="#fff" stroke="#777"/><path d="M795.500 233v3M792.500 236.500h6" stroke="#888"/>
<path d="M436 249h425v550H436z" fill="#fff" stroke="#7b7d7c" stroke-width="2"/><path d="M456.500 269.500h385v509h-385z" fill="none" stroke="#c8c8c8"/>${shapes}<path d="M785.500 612v14" stroke="#000"/></svg>`});

def('scroll-bar',`:host{display:block;width:15px;flex:none;background:#cdcdcd;border-right:1px solid #b0b0b0;padding:150px 0 0 3px}div{width:8px;height:301px;border-radius:4px;background:#7f8382}`,`<div></div>`);
def('panel-handle',`:host{position:absolute;top:280px;width:7px;height:73px;background:#909493;display:flex;align-items:center;justify-content:center}`,
e=>`<svg width="6" height="8"><path d="${e.hasAttribute('right')?'M1 0v8l5-4z':'M6 0v8L0 4z'}" fill="#fff"/></svg>`);

def('section-head',`:host{display:flex;align-items:center;height:18px;background:#e6e6e5;font-weight:700;font-size:13.200px;gap:2px;padding-left:2px;flex:none;width:329px;line-height:16px;padding-bottom:1px}:host([low]){padding:1px 0 0 2px}svg{flex:none}`,`<svg width="12" height="7"><path d="M0 .5h11.500L5.700 6.500z" fill="#2e3436"/></svg><slot></slot>`);
def('spin-box',`:host{display:flex;flex:none;width:151px;height:42px;background:#fff;border:1px solid #c8c3be;border-radius:5px;color:#000;font-size:13px;align-items:center}span{flex:1;padding-left:8px}i{width:35px;height:40px;border-left:1px solid #e6e4e2;display:flex;align-items:center;justify-content:center}`,
`<span><slot></slot></span><i><svg width="14" height="14"><path d="M0 7h14" stroke="#d5d4d2" stroke-width="1.500"/></svg></i><i><svg width="14" height="14"><path d="M0 7h14M7 0v14" stroke="#2e3436" stroke-width="2"/></svg></i>`);
def('side-bar',`:host{display:flex;width:387px;flex:none;overflow:hidden}.c{width:337px;overflow:hidden;padding-left:8px}.row{display:flex;align-items:center;white-space:nowrap;flex:none;width:520px}.tabs{width:50px;display:flex;flex-direction:column;align-items:center;padding:3px 6px 0 0}.tabs ui-icon{height:36px;margin-bottom:6px}.tabs ui-icon[pressed]{height:34px;margin:3px 0 7px}
.combo{display:flex;width:247px;height:35px;border:1px solid #c8c3be;border-radius:4px;background:#fff;align-items:center;font-size:13px;color:#000;padding-left:8px;margin-left:10px}.combo span{flex:1}.combo i{width:35px;height:33px;border-left:1px solid #c8c3be;background:linear-gradient(#f4f3f2,#eceae8);border-radius:0 3px 3px 0;display:flex;align-items:center;justify-content:center}
.lab{font-size:13px;display:flex;height:23px;align-items:center;padding-left:6px;width:329px}.lab span:first-child{width:188px}hr{margin:0 0 0 9px;border:0;height:1px;background:#dad8d5}`,
`<div class="c">
<div class="row" style="height:28px">${strip(1021,[['grip',1023]])}<b style="font-size:13.200px;letter-spacing:.2px;margin-left:6px;width:303px">Properties</b><ui-icon name="x"></ui-icon></div>
<section-head>Character</section-head>
<div class="row" style="height:51px"><div class="combo"><span>Liberation Sans</span><i><ui-icon name="ddl"></ui-icon></i></div><div class="combo" style="margin-left:14px"><span>18 pt</span></div></div>
<div class="row" style="height:40px">${strip(1021,[['bold',1048],['ital',1085],['und',1122],['ddl',1150],['strike',1178],['shad',1216],['grow',1341]])}</div>
<div class="row" style="height:50px;margin-bottom:3px">${strip(1021,[['fcol',1049],['ddl',1076],['hl',1117],['ddl',1144],['clear',1184],['sup',1270],['sub',1307],['colon',1351]])}</div>
<section-head low>Paragraph</section-head>
<div class="row" style="height:54px">${strip(1021,[['al',1049],['ac',1086,'pressed wide'],['ar',1123],['aj',1160],['vt',1301],['vc',1338,'pressed wide']])}</div><hr>
<div class="lab"><span>Spacing:</span><span>Indent:</span></div>
<div class="row" style="height:40px;margin-bottom:2px">${strip(1021,[['sinc',1049],['sdec',1086],['ii',1237],['id',1274],['ii',1311]])}</div>
<div class="row" style="height:45px">${strip(1021,[['above',1041]])}<spin-box style="margin:0 8px 0 5px">0.00″</spin-box><ui-icon name="bi"></ui-icon><spin-box style="margin-left:5px">0.00″</spin-box></div>
<div class="row" style="height:45px">${strip(1021,[['below',1041]])}<spin-box style="margin:0 8px 0 5px">0.00″</spin-box><ui-icon name="ai"></ui-icon><spin-box style="margin-left:5px">0.00″</spin-box></div>
<div class="row" style="height:45px;margin-bottom:6px">${strip(1021,[['lsp',1051],['ddl',1079],['fi',1229]])}<spin-box style="margin-left:5px">0.00″</spin-box></div>
<section-head low>Lists</section-head>
<div class="row" style="height:54px">${strip(1021,[['bul',1049],['ddl',1076],['num',1104],['ddl',1131],['dem',1264],['pro',1301],['mdn',1338]])}</div>
</div><div class="tabs"><ui-icon name="menu"></ui-icon><ui-icon name="props" pressed wide></ui-icon><ui-icon name="styles"></ui-icon><ui-icon name="gallery"></ui-icon><ui-icon name="compass"></ui-icon><ui-icon name="diamond"></ui-icon></div>`);

def('tool-tip',`:host{position:absolute;left:587px;top:106px;width:153px;height:42px;border-radius:4px;background:rgba(40,40,40,.96);color:#fff;display:flex;align-items:center;justify-content:center;font-size:13px;white-space:nowrap}`,`<slot></slot>`);
def('guest-screen',`:host{display:block;position:relative;width:1360px;height:708px;margin:0 40px;background:#f5f4f2;overflow:hidden}.body{display:flex;height:595px;position:relative}`,
`<guest-panel></guest-panel><draw-title></draw-title><menu-bar></menu-bar><tool-bar></tool-bar><div class="body"><shape-bar></shape-bar><pages-panel></pages-panel><canvas-view></canvas-view><scroll-bar></scroll-bar><side-bar></side-bar><panel-handle style="left:230px"></panel-handle><panel-handle right style="left:972px"></panel-handle></div><tool-tip>Insert Text Box (F2)</tool-tip>`);
def('desk-top',`:host{display:block;width:1440px;height:810px;background:#000;overflow:hidden}`,`<host-panel></host-panel><qemu-frame></qemu-frame><guest-screen></guest-screen>`);
</script></body></html>
